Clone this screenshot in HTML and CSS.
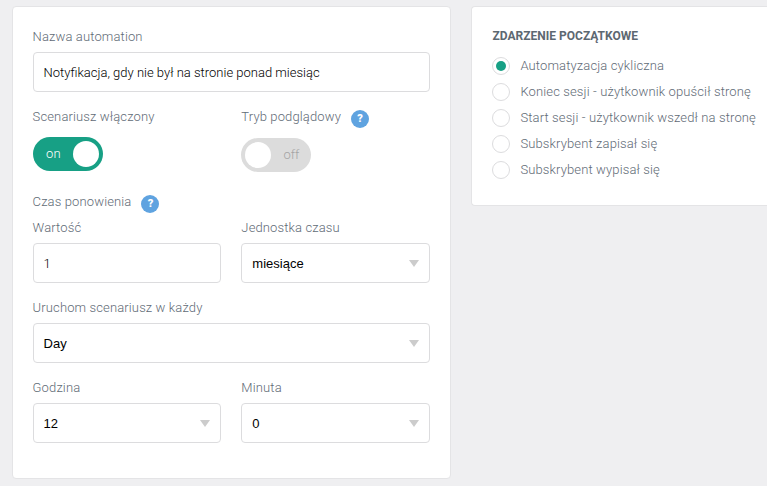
FILE: index.html
```html
<!DOCTYPE html>
<html lang="pl">
<head>
<meta charset="utf-8">
<title>Automation</title>
<link rel="stylesheet" href="styles.css">
</head>
<body>
<main class="page">
  <form class="panel settings">
    <div class="field">
      <label class="label">Nazwa automation</label>
      <div class="input">Notyfikacja, gdy nie był na stronie ponad miesiąc</div>
    </div>
    <div class="row toggles">
      <div>
        <div class="label">Scenariusz włączony</div>
        <div class="switch on"><span class="state">on</span><span class="knob"></span></div>
      </div>
      <div>
        <div class="label with-help"><span>Tryb podglądowy</span><span class="help">?</span></div>
        <div class="switch off"><span class="knob"></span><span class="state">off</span></div>
      </div>
    </div>
    <div class="label with-help repeat"><span>Czas ponowienia</span><span class="help">?</span></div>
    <div class="row">
      <div class="field">
        <label class="label">Wartość</label>
        <div class="input">1</div>
      </div>
      <div class="field">
        <label class="label">Jednostka czasu</label>
        <div class="input select">miesiące<svg class="arrow" viewBox="0 0 10 7"><path d="M0 0h10L5 7z"/></svg></div>
      </div>
    </div>
    <div class="field">
      <label class="label">Uruchom scenariusz w każdy</label>
      <div class="input select">Day<svg class="arrow" viewBox="0 0 10 7"><path d="M0 0h10L5 7z"/></svg></div>
    </div>
    <div class="row">
      <div class="field">
        <label class="label">Godzina</label>
        <div class="input select">12<svg class="arrow" viewBox="0 0 10 7"><path d="M0 0h10L5 7z"/></svg></div>
      </div>
      <div class="field">
        <label class="label">Minuta</label>
        <div class="input select">0<svg class="arrow" viewBox="0 0 10 7"><path d="M0 0h10L5 7z"/></svg></div>
      </div>
    </div>
  </form>
  <section class="panel events">
    <h2 class="title">ZDARZENIE POCZĄTKOWE</h2>
    <div class="option"><span class="radio checked"></span><span>Automatyzacja cykliczna</span></div>
    <div class="option"><span class="radio"></span><span>Koniec sesji - użytkownik opuścił stronę</span></div>
    <div class="option"><span class="radio"></span><span>Start sesji - użytkownik wszedł na stronę</span></div>
    <div class="option"><span class="radio"></span><span>Subskrybent zapisał się</span></div>
    <div class="option"><span class="radio"></span><span>Subskrybent wypisał się</span></div>
  </section>
</main>
</body>
</html>
```
FILE: styles.css
```css
* { box-sizing: border-box; }
body {
  margin: 0;
  background: #efeff1;
  color: #5f6b76;
  font: 300 13px/20px Roboto, "Liberation Sans", sans-serif;
  letter-spacing: 0.13px;
}
.page {
  display: flex;
  align-items: flex-start;
  gap: 20.2px;
  height: 486px;
  padding: 6px 0 0 11.6px;
}
.panel {
  flex: none;
  background: #fff;
  border: 1px solid #e4e4e6;
  border-radius: 4px;
}
.settings {
  width: 439px;
  height: 473px;
  padding: 20px;
}
.row {
  display: grid;
  grid-template-columns: repeat(2, minmax(0, 1fr));
  gap: 20.5px;
}
.field { margin-bottom: 15px; }
.row .field { min-width: 0; }
.label { display: block; height: 20px; }
.input {
  display: flex;
  align-items: center;
  height: 40px;
  margin-top: 5px;
  padding: 1px 10px 0;
  border: 1px solid #dcdcde;
  border-radius: 4px;
  color: #000;
  letter-spacing: 0;
}
.select {
  justify-content: space-between;
  font-family: "Liberation Sans", sans-serif;
  font-weight: 400;
}
.arrow { width: 10px; height: 7px; margin: 0 -0.4px 1px 0; fill: #ccc; }
.toggles { height: 85px; }
.with-help { display: flex; align-items: flex-start; gap: 10px; }
.help {
  flex: none;
  width: 18px;
  height: 18px;
  margin-top: 3px;
  border-radius: 50%;
  background: #5fa3e0;
  color: #fff;
  font-size: 11px;
  font-weight: 900;
  line-height: 18px;
  letter-spacing: 0;
  text-align: center;
}
.repeat { height: 26px; }
.switch {
  display: flex;
  align-items: center;
  justify-content: space-between;
  width: 70px;
  height: 34px;
  margin-top: 10px;
  padding: 0 4px;
  border-radius: 17px;
  letter-spacing: 0;
}
.on { background: #17a085; color: #fff; padding-left: 13.5px; }
.off { margin-top: 11px; background: #dcdcdc; color: #a4a4a4; padding-right: 12px; }
.knob { width: 26px; height: 26px; border-radius: 50%; background: #fff; }
.events {
  flex: 1 1 0;
  min-width: 0;
  height: 200px;
  padding: 19px 0 19px 20.8px;
  border-right: 0;
  border-radius: 4px 0 0 4px;
}
.title {
  margin: 0 0 7px;
  color: #5d6871;
  font-size: 12px;
  font-weight: 700;
  line-height: 20px;
  letter-spacing: 0;
}
.option { display: flex; align-items: center; gap: 10px; height: 26px; white-space: nowrap; }
.radio {
  display: grid;
  place-items: center;
  width: 18px;
  height: 18px;
  margin-left: -0.2px;
  border: 1px solid #dcdcde;
  border-radius: 50%;
}
.checked::after {
  content: "";
  width: 10px;
  height: 10px;
  border-radius: 50%;
  background: #17a085;
}
```
